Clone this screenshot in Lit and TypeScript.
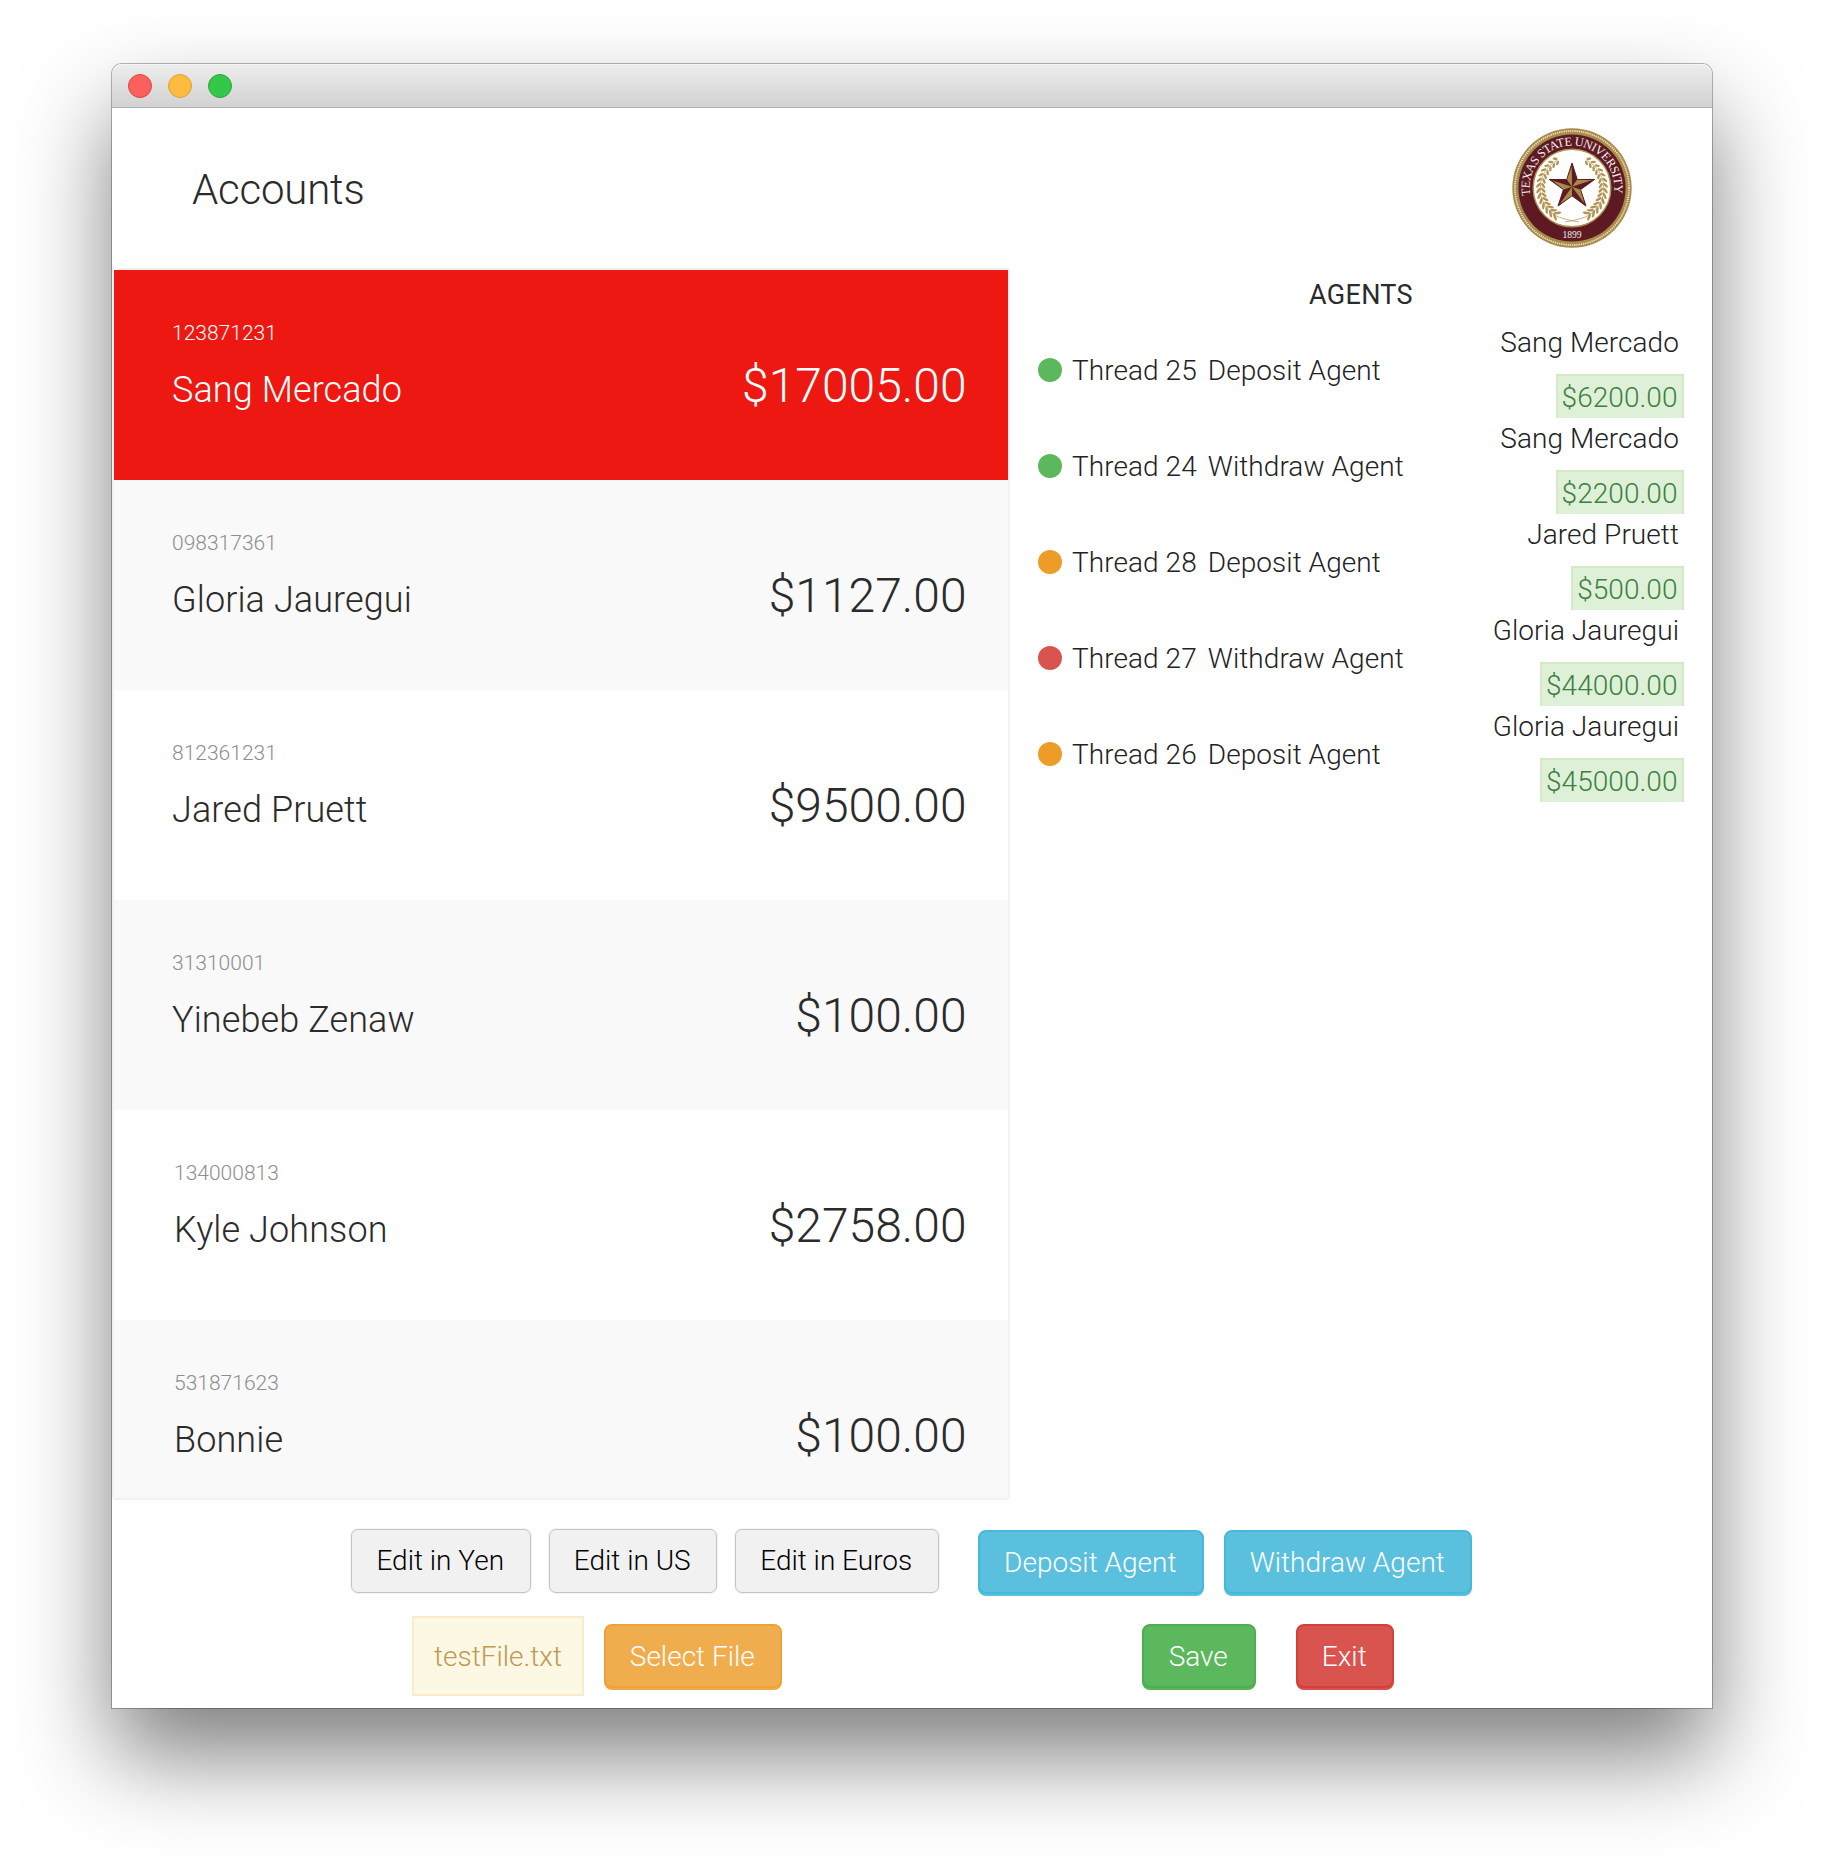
import { LitElement, html, svg, css } from "lit";
import { customElement } from "lit/decorators.js";
import { classMap } from "lit/directives/class-map.js";

interface Account { id: string; name: string; balance: string; wide?: boolean }
interface Agent { thread: number; kind: string; status: string; account: string; amount: string }

const ACCOUNTS: Account[] = [
  { id: "123871231", name: "Sang Mercado", balance: "$17005.00" },
  { id: "098317361", name: "Gloria Jauregui", balance: "$1127.00" },
  { id: "812361231", name: "Jared Pruett", balance: "$9500.00" },
  { id: "31310001", name: "Yinebeb Zenaw", balance: "$100.00" },
  { id: "134000813", name: "Kyle Johnson", balance: "$2758.00", wide: true },
  { id: "531871623", name: "Bonnie", balance: "$100.00", wide: true },
];

const AGENTS: Agent[] = [
  { thread: 25, kind: "Deposit Agent", status: "running", account: "Sang Mercado", amount: "$6200.00" },
  { thread: 24, kind: "Withdraw Agent", status: "running", account: "Sang Mercado", amount: "$2200.00" },
  { thread: 28, kind: "Deposit Agent", status: "paused", account: "Jared Pruett", amount: "$500.00" },
  { thread: 27, kind: "Withdraw Agent", status: "stopped", account: "Gloria Jauregui", amount: "$44000.00" },
  { thread: 26, kind: "Deposit Agent", status: "paused", account: "Gloria Jauregui", amount: "$45000.00" },
];

const polar = (r: number, deg: number): [number, number] => {
  const a = (deg * Math.PI) / 180;
  return [r * Math.sin(a), -r * Math.cos(a)];
};
const pts = (...p: [number, number][]) => p.map(([x, y]) => `${x.toFixed(2)},${y.toFixed(2)}`).join(" ");

@customElement("university-seal")
class UniversitySeal extends LitElement {
  static styles = css`
    :host { display: block; width: 120px; height: 120px; }
    svg { display: block; }
    .lettering { font-family: "Liberation Serif", serif; fill: #f4ecec; }
  `;

  private star() {
    const R = 23.8, r = 9;
    const outline = pts(...[0, 1, 2, 3, 4].flatMap((i) => [polar(R, i * 72), polar(r, i * 72 + 36)]));
    return svg`
      <g transform="translate(0 -1.2)">
        <polygon points=${outline} fill="#5d1a22" stroke="#5d1a22" stroke-width="1"></polygon>
        ${[0, 1, 2, 3, 4].map((i) => svg`
          <polygon fill="#a8894a" points=${pts([0, 0], polar(r - 0.4, i * 72 - 36), polar(R - 3, i * 72 - 0.5))}></polygon>`)}
      </g>`;
  }

  private branch() {
    const leaves = [];
    for (let i = 0; i < 14; i++) {
      const deg = 30 + i * 9.2;
      const size = 2.5 + i * 0.1;
      for (const side of [-1, 1]) {
        const [x, y] = polar(31.3 + side * 2.4, deg);
        leaves.push(svg`<ellipse cx=${x} cy=${y} rx=${size} ry="1.25"
          transform="rotate(${deg - 180 + side * -38} ${x} ${y})"></ellipse>`);
      }
    }
    const [sx, sy] = polar(31.3, 28);
    return svg`
      ${leaves}
      <path d="M${sx} ${sy}A31.3 31.3 0 0 1 9 30.5Q2 32.5 -7 34" fill="none" stroke="#b2934f" stroke-width=".7"></path>`;
  }

  render() {
    return html`
      <svg width="120" height="120" viewBox="-60 -60 120 120">
        <defs><path id="ring" d="M-41.6 7.5A42.3 42.3 0 1 1 41.6 7.5"></path></defs>
        <circle r="59.7" fill="#a98b4c"></circle>
        <circle r="57" fill="none" stroke="#efe4c4" stroke-width="1.7" stroke-dasharray="1.3 .9"></circle>
        <circle r="53.6" fill="#5d1a22"></circle>
        <circle r="38.8" fill="#fff" stroke="#b2934f" stroke-width="1.4"></circle>
        <g fill="#b2934f">${this.branch()}</g>
        <g fill="#b2934f" transform="scale(-1 1)">${this.branch()}</g>
        ${this.star()}
        <text class="lettering" font-size="12.4"><textPath href="#ring" textLength="146" lengthAdjust="spacing">TEXAS STATE UNIVERSITY</textPath></text>
        <text class="lettering" x="0" y="50" font-size="9.6" text-anchor="middle">1899</text>
      </svg>`;
  }
}

@customElement("account-row")
class AccountRow extends LitElement {
  static properties = { account: { attribute: false }, selected: { type: Boolean, reflect: true } };
  declare account: Account;
  declare selected: boolean;

  static styles = css`
    :host { display: block; box-sizing: border-box; height: 210px; flex: none; color: #2b2b2b; }
    .row { padding: 48px 41.5px 0 58px; }
    .row.wide { padding-left: 60px; }
    .id { font-size: 21px; line-height: 30px; color: #8e8e8e; }
    .line { display: flex; align-items: baseline; justify-content: space-between; margin-top: 12.5px; }
    .name { font-size: 36px; line-height: 40px; letter-spacing: .1px; }
    .balance { font-size: 48px; line-height: 50px; }
    :host([selected]) { background: #ed1812; color: #fff; }
    :host([selected]) .id { color: #fff; }
  `;

  render() {
    const a = this.account;
    return html`
      <div class=${classMap({ row: true, wide: !!a.wide })}>
        <div class="id">${a.id}</div>
        <div class="line"><span class="name">${a.name}</span><span class="balance">${a.balance}</span></div>
      </div>`;
  }
}

@customElement("agent-row")
class AgentRow extends LitElement {
  static properties = { agent: { attribute: false } };
  declare agent: Agent;

  static styles = css`
    :host { display: flex; height: 96px; overflow: hidden; padding: 0 28px; align-items: center; letter-spacing: .06px; color: #222; }
    .dot { width: 24px; height: 24px; border-radius: 50%; margin-right: 10px; }
    .running { background: #5cb85c; }
    .paused { background: #ed9c28; }
    .stopped { background: #d9534f; }
    .thread, .kind { padding-top: 1px; }
    .kind { margin-left: 11px; flex: 1; }
    .target { align-self: flex-start; display: flex; flex-direction: column; align-items: flex-end; line-height: 40px; }
    .account { margin: 1px 5px 0 0; }
    .amount { margin-top: 11px; padding: 1px 4.5px 3px 4px; line-height: 42px; border: 2px solid #d6e9c6; background: #dff0d8; color: #3c7f3e; }
  `;

  render() {
    const a = this.agent;
    return html`
      <span class="dot ${a.status}"></span>
      <span class="thread">Thread ${a.thread}</span>
      <span class="kind">${a.kind}</span>
      <div class="target">
        <span class="account">${a.account}</span>
        <span class="amount">${a.amount}</span>
      </div>`;
  }
}

@customElement("app-root")
class AppRoot extends LitElement {
  static styles = css`
    :host {
      display: block; box-sizing: border-box; width: 1824px; height: 1868px; overflow: hidden;
      padding: 64px 112px 0; background: #fff; color: #2b2b2b;
      font: 300 28px/40px Roboto, "Liberation Sans", sans-serif;
    }
    .window {
      display: flex; flex-direction: column; height: 1644px; background: #fff; border-radius: 10px 10px 0 0;
      box-shadow: 0 0 0 1px rgba(0, 0, 0, .28), 0 48px 92px rgba(0, 0, 0, .5);
    }
    .titlebar {
      box-sizing: border-box; height: 44px; flex: none; display: flex; align-items: center; gap: 16px; padding-left: 16px;
      border-radius: 10px 10px 0 0; border-bottom: 1px solid #b1b1b1;
      background: linear-gradient(#ededed, #d2d2d2); box-shadow: inset 0 1px #f6f6f6;
    }
    .light { box-sizing: border-box; width: 24px; height: 24px; border-radius: 50%; border: 1px solid; }
    .close { background: #fc605c; border-color: #e0443f; }
    .minimize { background: #fdbc40; border-color: #dea034; }
    .zoom { background: #34c84a; border-color: #27a935; }
    header { height: 160px; box-sizing: border-box; padding: 0 80px; display: flex; align-items: center; justify-content: space-between; }
    h1 { margin: 3px 0 0; font-size: 42px; font-weight: 300; line-height: 50px; letter-spacing: -.2px; }
    main { display: flex; height: 1232px; }
    .accounts {
      box-sizing: border-box; width: 898px; overflow: hidden; display: flex; flex-direction: column;
      border: 2px solid #f2f2f2; border-radius: 0 0 4px 4px;
    }
    .accounts account-row:nth-child(even) { background: #f9f9f9; }
    .agents { flex: 1; }
    h2 { margin: 0; padding: 7px 0; text-align: center; font-size: 27px; font-weight: 400; line-height: 40px; letter-spacing: .3px; }
    footer { flex: 1; display: flex; flex-direction: column; }
    .actions { display: flex; align-items: flex-start; }
    .currencies { padding: 29px 0 0 239px; }
    .files { padding: 30px 0 0 300px; }
    button {
      box-sizing: border-box; height: 64px; padding: 0 1.5px 0 0; margin: 0; border-radius: 8px; border: 2px solid;
      font: inherit; color: #fff; text-align: center; white-space: nowrap;
    }
    .plain { background: #f1f1f1; border: 1px solid #c4c4c4; color: #000; box-shadow: 0 0 0 1px #f4f4f4; border-radius: 7px; margin-right: 18px; }
    .info { background: #5bc0de; border-color: #46b8da; box-shadow: 0 2px #5bc0de; margin-top: 1px; }
    .warning { background: #f0ad4e; border-color: #eea236; box-shadow: 0 2px #eeab4a; }
    .success { background: #5cb85c; border-color: #4cae4c; box-shadow: 0 2px #58b558; }
    .danger { background: #d9534f; border-color: #d43f3a; box-shadow: 0 2px #d8504b; }
    .info, .warning, .success, .danger { padding-top: 1px; }
    .filename {
      box-sizing: border-box; width: 172px; height: 80px; line-height: 77px; margin: -8px 20px 0 0; text-align: center;
      background: #fcf8e3; border: 2px solid #faebcc; color: #c09853;
    }
    .yen { width: 180px; }
    .us { width: 168px; }
    .euros { width: 204px; margin-right: 39px; }
    .deposit { width: 226px; margin-right: 20px; }
    .withdraw { width: 248px; }
    .select { width: 178px; margin-right: 360px; }
    .save { width: 114px; margin-right: 40px; }
    .exit { width: 98px; }
  `;

  render() {
    return html`
      <div class="window">
        <div class="titlebar">
          <span class="light close"></span><span class="light minimize"></span><span class="light zoom"></span>
        </div>
        <header>
          <h1>Accounts</h1>
          <university-seal></university-seal>
        </header>
        <main>
          <section class="accounts">
            ${ACCOUNTS.map((a, i) => html`<account-row .account=${a} ?selected=${i === 0}></account-row>`)}
          </section>
          <section class="agents">
            <h2>AGENTS</h2>
            ${AGENTS.map((a) => html`<agent-row .agent=${a}></agent-row>`)}
          </section>
        </main>
        <footer>
          <div class="actions currencies">
            <button class="plain yen">Edit in Yen</button>
            <button class="plain us">Edit in US</button>
            <button class="plain euros">Edit in Euros</button>
            <button class="info deposit">Deposit Agent</button>
            <button class="info withdraw">Withdraw Agent</button>
          </div>
          <div class="actions files">
            <span class="filename">testFile.txt</span>
            <button class="warning select">Select File</button>
            <button class="success save">Save</button>
            <button class="danger exit">Exit</button>
          </div>
        </footer>
      </div>`;
  }
}
